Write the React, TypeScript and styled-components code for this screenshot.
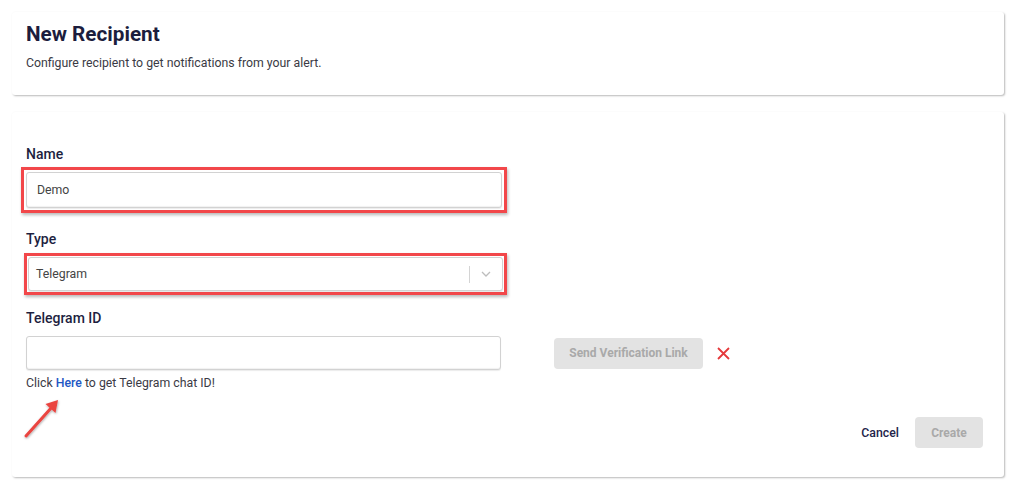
import React from "react";
import styled, { createGlobalStyle } from "styled-components";

const Global = createGlobalStyle`
  html, body { margin: 0; padding: 0; background: #ffffff; }
  body { font-family: Roboto, "Liberation Sans", Arial, sans-serif; -webkit-font-smoothing: antialiased; }
  * { box-sizing: border-box; }
`;

const Page = styled.div`
  padding: 12px 20px 12px 12px;
  display: flex;
  flex-direction: column;
  gap: 17px;
`;

const Card = styled.section<{ $pt: number; $pb: number }>`
  position: relative;
  width: 992px;
  background: #fff;
  border-radius: 3px;
  box-shadow: 1px 1px 2px rgba(0, 0, 0, 0.28);
  padding: ${(p) => p.$pt}px 14px ${(p) => p.$pb}px 14px;
`;

const Title = styled.h1`
  margin: 0;
  font-size: 20.7px;
  line-height: 24px;
  font-weight: 700;
  color: #1c1d3d;
`;

const Subtitle = styled.p`
  margin: 10px 0 0;
  font-size: 12.3px;
  line-height: 14px;
  color: #3a3a44;
`;

const Label = styled.div<{ $mt?: number; $mb: number }>`
  margin-top: ${(p) => p.$mt ?? 0}px;
  margin-bottom: ${(p) => p.$mb}px;
  font-size: 14px;
  line-height: 16px;
  font-weight: 500;
  color: #1e1f3f;
`;

const Highlight = styled.div<{ $ml: number; $w: number; $pad: number }>`
  margin-left: ${(p) => p.$ml}px;
  width: ${(p) => p.$w}px;
  padding: ${(p) => p.$pad}px;
  border: 3px solid #f2474a;
  box-shadow: 1px 2px 3px rgba(0, 0, 0, 0.28);
  background: #fff;
`;

const TextInput = styled.div<{ $w?: number; $h: number }>`
  width: ${(p) => (p.$w ? `${p.$w}px` : "100%")};
  height: ${(p) => p.$h}px;
  border: 1px solid #d2d2d2;
  border-radius: 3px;
  background: #fff;
  box-shadow: inset 0 -1px 1px rgba(0, 0, 0, 0.06), 0 1px 1px rgba(0, 0, 0, 0.08);
  display: flex;
  align-items: center;
  padding: 0 10px;
  font-size: 12.3px;
  color: #444;
`;

const SelectBox = styled.div`
  height: 34px;
  border: 1px solid #d2d2d2;
  border-radius: 3px;
  background: #fff;
  box-shadow: 0 1px 1px rgba(0, 0, 0, 0.1);
  display: flex;
  align-items: center;
  padding-left: 7px;
  font-size: 12.3px;
  color: #444;
`;

const SelectValue = styled.span`
  flex: 1;
`;

const SelectDivider = styled.span`
  width: 1px;
  height: 17px;
  background: #d4d4d4;
`;

const Chevron = styled.span`
  width: 32px;
  display: flex;
  justify-content: center;
  align-items: center;
`;

const IdRow = styled.div`
  display: flex;
  align-items: center;
`;

const GreyButton = styled.button<{ $w: number }>`
  width: ${(p) => p.$w}px;
  height: 31px;
  border: none;
  border-radius: 4px;
  background: #e3e3e3;
  color: #a9a9a9;
  font-family: inherit;
  font-size: 12px;
  font-weight: 700;
  padding: 0;
`;

const SendButton = styled(GreyButton)`
  margin-left: 53px;
`;

const RemoveIcon = styled.span`
  margin-left: 14px;
  display: flex;
`;

const Helper = styled.div`
  margin-top: 6px;
  font-size: 12.3px;
  line-height: 14px;
  color: #3a3a44;
`;

const HereLink = styled.a`
  color: #2257c4;
  font-weight: 500;
  text-decoration: none;
`;

const Footer = styled.div`
  margin-top: 27px;
  padding-right: 7px;
  display: flex;
  justify-content: flex-end;
  align-items: center;
  gap: 16px;
`;

const CancelButton = styled.button`
  border: none;
  background: none;
  padding: 0;
  font-family: inherit;
  font-size: 12.3px;
  font-weight: 500;
  color: #23244a;
`;

const Arrow = styled.svg`
  position: absolute;
  left: 8px;
  top: 286px;
  overflow: visible;
`;

export default function App() {
  return (
    <>
      <Global />
      <Page>
        <Card $pt={10} $pb={25}>
          <Title>New Recipient</Title>
          <Subtitle>Configure recipient to get notifications from your alert.</Subtitle>
        </Card>
        <Card $pt={34} $pb={29}>
          <Label $mb={5}>Name</Label>
          <Highlight $ml={-5} $w={486} $pad={2}>
            <TextInput $h={36}>Demo</TextInput>
          </Highlight>

          <Label $mt={18} $mb={6}>Type</Label>
          <Highlight $ml={-2} $w={483} $pad={1}>
            <SelectBox>
              <SelectValue>Telegram</SelectValue>
              <SelectDivider />
              <Chevron>
                <svg width="10" height="6" viewBox="0 0 10 6">
                  <path d="M1 1 L5 5 L9 1" fill="none" stroke="#bdbdbd" strokeWidth="1.3" />
                </svg>
              </Chevron>
            </SelectBox>
          </Highlight>

          <Label $mt={15} $mb={10}>Telegram ID</Label>
          <IdRow>
            <TextInput $w={475} $h={34} />
            <SendButton $w={149}>Send Verification Link</SendButton>
            <RemoveIcon>
              <svg width="13" height="13" viewBox="0 0 13 13">
                <path d="M1 1 L12 12 M12 1 L1 12" stroke="#e5393b" strokeWidth="1.8" />
              </svg>
            </RemoveIcon>
          </IdRow>
          <Helper>
            Click <HereLink href="#">Here</HereLink> to get Telegram chat ID!
          </Helper>

          <Footer>
            <CancelButton>Cancel</CancelButton>
            <GreyButton $w={68}>Create</GreyButton>
          </Footer>

          <Arrow width="44" height="44" viewBox="0 0 44 44">
            <defs>
              <filter id="ash" x="-30%" y="-30%" width="160%" height="160%">
                <feDropShadow dx="0.5" dy="1" stdDeviation="0.8" floodColor="#000" floodOpacity="0.35" />
              </filter>
            </defs>
            <g filter="url(#ash)">
              <path d="M6 38 L32 9" stroke="#ea4440" strokeWidth="3" strokeLinecap="round" />
              <path d="M38 2 L35.5 15 L25.5 6 Z" fill="#ea4440" />
            </g>
          </Arrow>
        </Card>
      </Page>
    </>
  );
}
